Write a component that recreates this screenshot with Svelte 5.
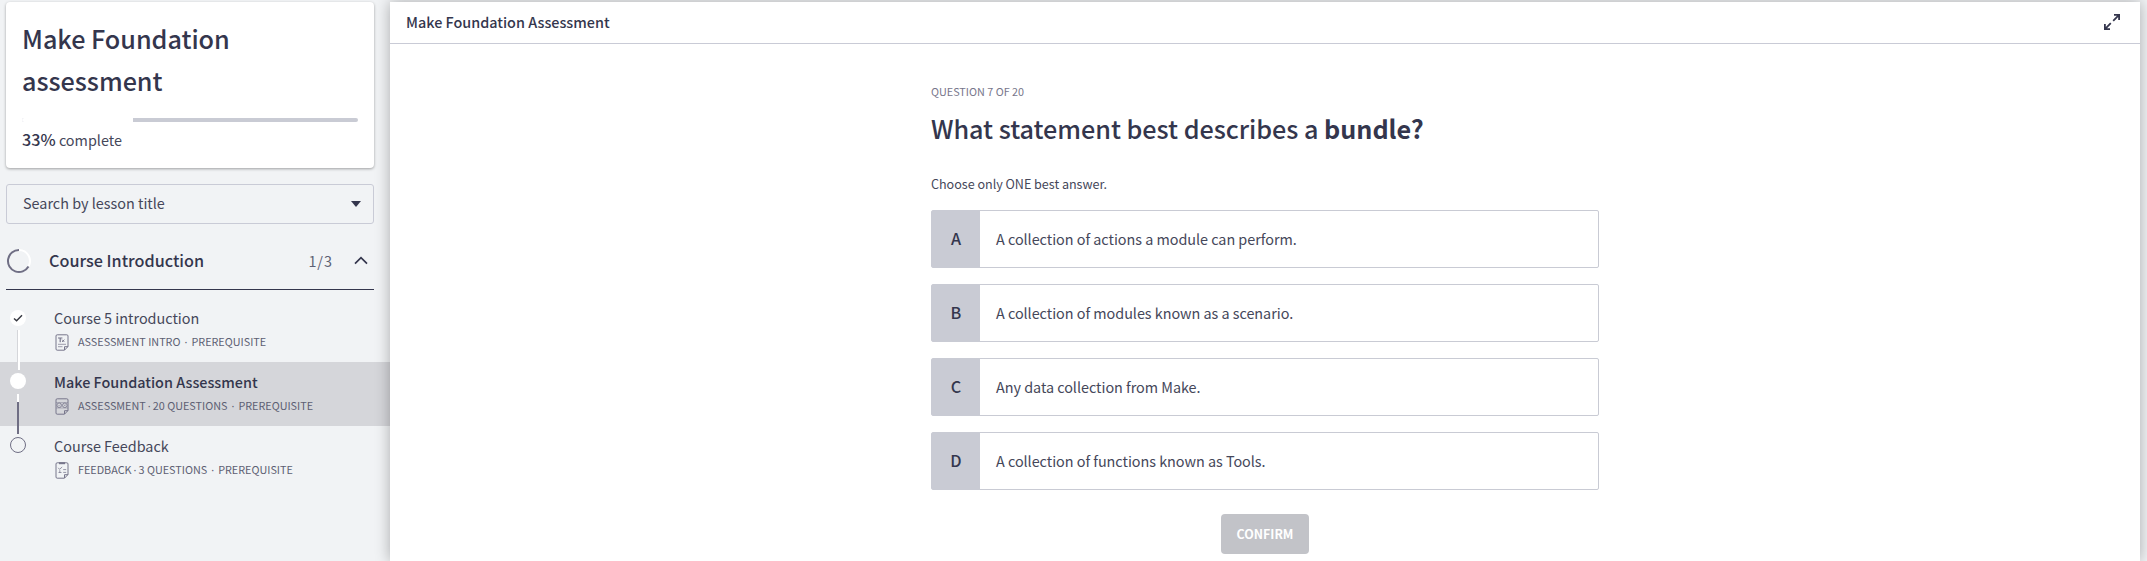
<script>
  const lessons = [
    { title: 'Course 5 introduction', kind: 'text', meta: ['ASSESSMENT INTRO'], state: 'done' },
    { title: 'Make Foundation Assessment', kind: 'quiz', meta: ['ASSESSMENT', '20 QUESTIONS'], state: 'active' },
    { title: 'Course Feedback', kind: 'survey', meta: ['FEEDBACK', '3 QUESTIONS'], state: 'todo' }
  ];
  const answers = [
    { key: 'A', text: 'A collection of actions a module can perform.' },
    { key: 'B', text: 'A collection of modules known as a scenario.' },
    { key: 'C', text: 'Any data collection from Make.' },
    { key: 'D', text: 'A collection of functions known as Tools.' }
  ];
  const progress = 33;
</script>

<div class="page">
  <aside class="sidebar">
    <div class="card">
      <h1>Make Foundation assessment</h1>
      <div class="bar"><div class="fill" style="width: {progress}%"></div></div>
      <p class="complete"><b>{progress}%</b> complete</p>
    </div>

    <div class="search">
      <span>Search by lesson title</span>
      <svg width="10" height="6" viewBox="0 0 10 6"><path d="M0 0h10L5 6z" fill="#34364d" /></svg>
    </div>

    <div class="section">
      <svg width="26" height="26" viewBox="0 0 26 26" fill="none" stroke-width="2">
        <path d="M13 2A11 11 0 0 1 22.5 18.5" stroke="#fff" />
        <path d="M22.5 18.5A11 11 0 1 1 13 2" stroke="#6f6e84" />
      </svg>
      <span class="name">Course Introduction</span>
      <span class="count">1/3</span>
      <svg class="chev" width="14" height="9" viewBox="0 0 14 9" fill="none" stroke="#34364d" stroke-width="1.7"><path d="M1 7.7 7 1.7l6 6" /></svg>
    </div>

    <ul>
      {#each lessons as l}
        <li class={l.state}>
          <div class="track">
            <span class="dot">
              {#if l.state === 'done'}
                <svg width="16" height="16" viewBox="0 0 16 16" fill="none" stroke="#34363f" stroke-width="1.4"><path d="M4 8.4l2.6 2.4L12 5.2" /></svg>
              {/if}
            </span>
            {#if l.state !== 'todo'}<span class="line"></span>{/if}
          </div>
          <div class="info">
            <div class="title">{l.title}</div>
            <div class="meta">
              <svg width="14" height="17" viewBox="0 0 14 17" fill="none" stroke="#77768b" stroke-width="1">
                <path d="M9.5 16.2H2.2A1.2 1.2 0 0 1 1 15V2A1.2 1.2 0 0 1 2.2.8h9.6A1.2 1.2 0 0 1 13 2v10.5zM9.5 16V12.7H13" />
                {#if l.kind === 'text'}
                  <path d="M3 4h4.4M5.2 4v4.2" stroke-width="1.2" />
                  <path d="M7 5.6l2.4 2.4M9.4 5.6L7 8" stroke-width=".9" />
                  <path d="M3 10.3h8M3 12.7h4.5" stroke-opacity=".7" />
                {:else if l.kind === 'quiz'}
                  <g stroke-width=".8"><circle cx="4.2" cy="7.3" r="2.3" /><circle cx="9.8" cy="7.3" r="2.3" /><path d="M3 7.2l1 1 1.6-1.6M9 6.5l1.6 1.6M10.6 6.5L9 8.1M1 4.6h12M1 10h12" stroke-opacity=".6" /></g>
                {:else}
                  <path d="M4 1.2h6" stroke-width="2" />
                  <path d="M3.2 5.8l1.3 1.5L7.2 5M3.5 10.5h3M4.8 8.2v2.3M8.2 7.6h3M8.2 10.4h3" stroke-opacity=".75" />
                {/if}
              </svg>
              {#each l.meta as part, n}{#if n > 0}<i class="tight">·</i>{/if}<span>{part}</span>{/each}<i>·</i><span>PREREQUISITE</span>
            </div>
          </div>
        </li>
      {/each}
    </ul>
  </aside>

  <main>
    <header>
      <span>Make Foundation Assessment</span>
      <svg width="18" height="18" viewBox="0 0 18 18" fill="none" stroke="#34364d" stroke-width="1.8">
        <path d="M10.2 7.8l5.6-5.6M11 1.9h5.1V7M7.8 10.2l-5.6 5.6M1.9 11v5.1H7" />
      </svg>
    </header>
    <section class="quiz">
      <p class="step">QUESTION 7 OF 20</p>
      <h2>What statement best describes a <b>bundle?</b></h2>
      <p class="hint">Choose only ONE best answer.</p>
      {#each answers as a}
        <div class="answer"><span class="key">{a.key}</span><span class="text">{a.text}</span></div>
      {/each}
      <button>CONFIRM</button>
    </section>
  </main>
</div>

<style>
  :global(body) { background: #f1f3f5; overflow: hidden; }
  .page {
    display: flex;
    width: 2147px;
    height: 561px;
    overflow: hidden;
    background: #f1f3f5;
    color: #34364d;
    font-family: "Noto Sans CJK SC", "Noto Sans", sans-serif;
    font-size: 14.4px;
  }
  h1, h2, p, ul { margin: 0; padding: 0; font-weight: 400; }
  .sidebar { width: 390px; flex: none; padding-top: 2px; box-sizing: border-box; }
  .card {
    margin: 0 16px 0 6px;
    height: 166px;
    padding: 15px 16px 0 16px;
    box-sizing: border-box;
    background: #fff;
    border-radius: 4px;
    box-shadow: 0 1px 3px rgba(0, 0, 0, .35);
  }
  h1 { font-size: 25.2px; line-height: 42px; font-weight: 500; letter-spacing: -.03px; }
  .bar { height: 4px; margin-top: 17px; border-radius: 2px; overflow: hidden; background: #c9cbd4; }
  .fill { height: 100%; background: #fff; }
  .complete { margin-top: 6px; line-height: 24px; color: #45475a; }
  .complete b { font-weight: 500; font-size: 16.2px; line-height: 1; color: #34364d; }
  .search {
    display: flex;
    align-items: center;
    justify-content: space-between;
    height: 40px;
    margin: 16px 16px 0 6px;
    padding: 0 12px 0 16px;
    box-sizing: border-box;
    border: 1px solid #c9cbd6;
    border-radius: 3px;
    color: #45475a;
  }
  .search span { line-height: 24px; padding-bottom: 2px; }
  .section {
    display: flex;
    align-items: center;
    height: 66px;
    margin: 0 16px 0 6px;
    padding-top: 8px;
    box-sizing: border-box;
    border-bottom: 1px solid #34364d;
  }
  .name { margin-left: 17px; font-size: 16.2px; line-height: 24px; padding-bottom: 1px; font-weight: 500; flex: 1; }
  .count { color: #5d5f73; letter-spacing: 1px; margin-right: 21px; }
  .chev { margin-right: 6px; }
  ul { list-style: none; padding-top: 8px; }
  li { display: flex; height: 64px; }
  li.active { background: #d5d6da; }
  .track { width: 54px; flex: none; display: flex; flex-direction: column; padding: 12px 0 0 10px; box-sizing: border-box; }
  .dot { width: 16px; height: 16px; border-radius: 50%; background: #fff; flex: none; }
  .dot svg { display: block; }
  .todo .dot { background: none; border: 1px solid #6f6e84; box-sizing: border-box; margin-top: -1px; }
  .active .dot { margin-top: -1px; }
  .line { width: 3px; height: 40px; margin: 4px 0 0 7px; flex: none; background: #fff; box-shadow: inset 1px 0 #d5d6da; position: relative; z-index: 1; }
  .active .line { margin-top: 5px; width: 2px; box-shadow: none; background: linear-gradient(#fff 8px, #6f6e84 8px); }
  .title { line-height: 24px; margin-top: 8px; white-space: nowrap; color: #45475a; }
  .active .title { font-weight: 500; color: #34364d; }
  .meta { display: flex; align-items: center; height: 20px; margin-top: 2px; font-size: 10.8px; color: #5d5f73; white-space: nowrap; }
  .meta span { line-height: 16px; padding-bottom: 2px; }
  .meta svg { margin: 0 9px 0 1px; }
  .meta i { font-family: "Noto Sans", sans-serif; font-style: normal; line-height: 16px; padding-bottom: 1px; width: 3px; text-align: center; margin: 0 4px; }
  .meta i.tight { margin: 0 2px; }
  main { width: 1750px; flex: none; margin-top: 2px; background: #fff; box-shadow: 0 0 14px rgba(0, 0, 0, .3); position: relative; z-index: 2; }
  header {
    display: flex;
    align-items: center;
    justify-content: space-between;
    height: 42px;
    padding: 0 19px 0 16px;
    box-sizing: border-box;
    border-bottom: 1px solid #c9cbd6;
    font-weight: 500;
  }
  header span { line-height: 20px; padding-bottom: 2px; }
  header svg { margin-bottom: 1px; }
  .quiz { display: flex; flex-direction: column; width: 668px; margin-left: 541px; }
  .step { margin-top: 37px; line-height: 20px; font-size: 10.8px; color: #77768b; }
  h2 { margin-top: 9px; line-height: 36px; font-size: 25.2px; font-weight: 500; letter-spacing: -.03px; white-space: nowrap; }
  .hint { margin: 28px 0 16px; line-height: 20px; font-size: 12.6px; letter-spacing: -.03px; color: #45475a; }
  .answer { display: flex; height: 58px; margin-bottom: 16px; box-sizing: border-box; border: 1px solid #c9cbd4; border-radius: 2px; line-height: 56px; color: #45475a; }
  .key { width: 48px; text-align: center; background: #c9cbd4; color: #34364d; font-size: 16.2px; line-height: 54px; font-weight: 500; }
  .text { padding-left: 16px; letter-spacing: -.03px; }
  button { align-self: center; width: 88px; height: 40px; margin-top: 8px; padding: 0; border: 0; border-radius: 4px; background: #c2c3c8; color: #fff; font: 700 12.4px "Noto Sans CJK SC", sans-serif; }
</style>
